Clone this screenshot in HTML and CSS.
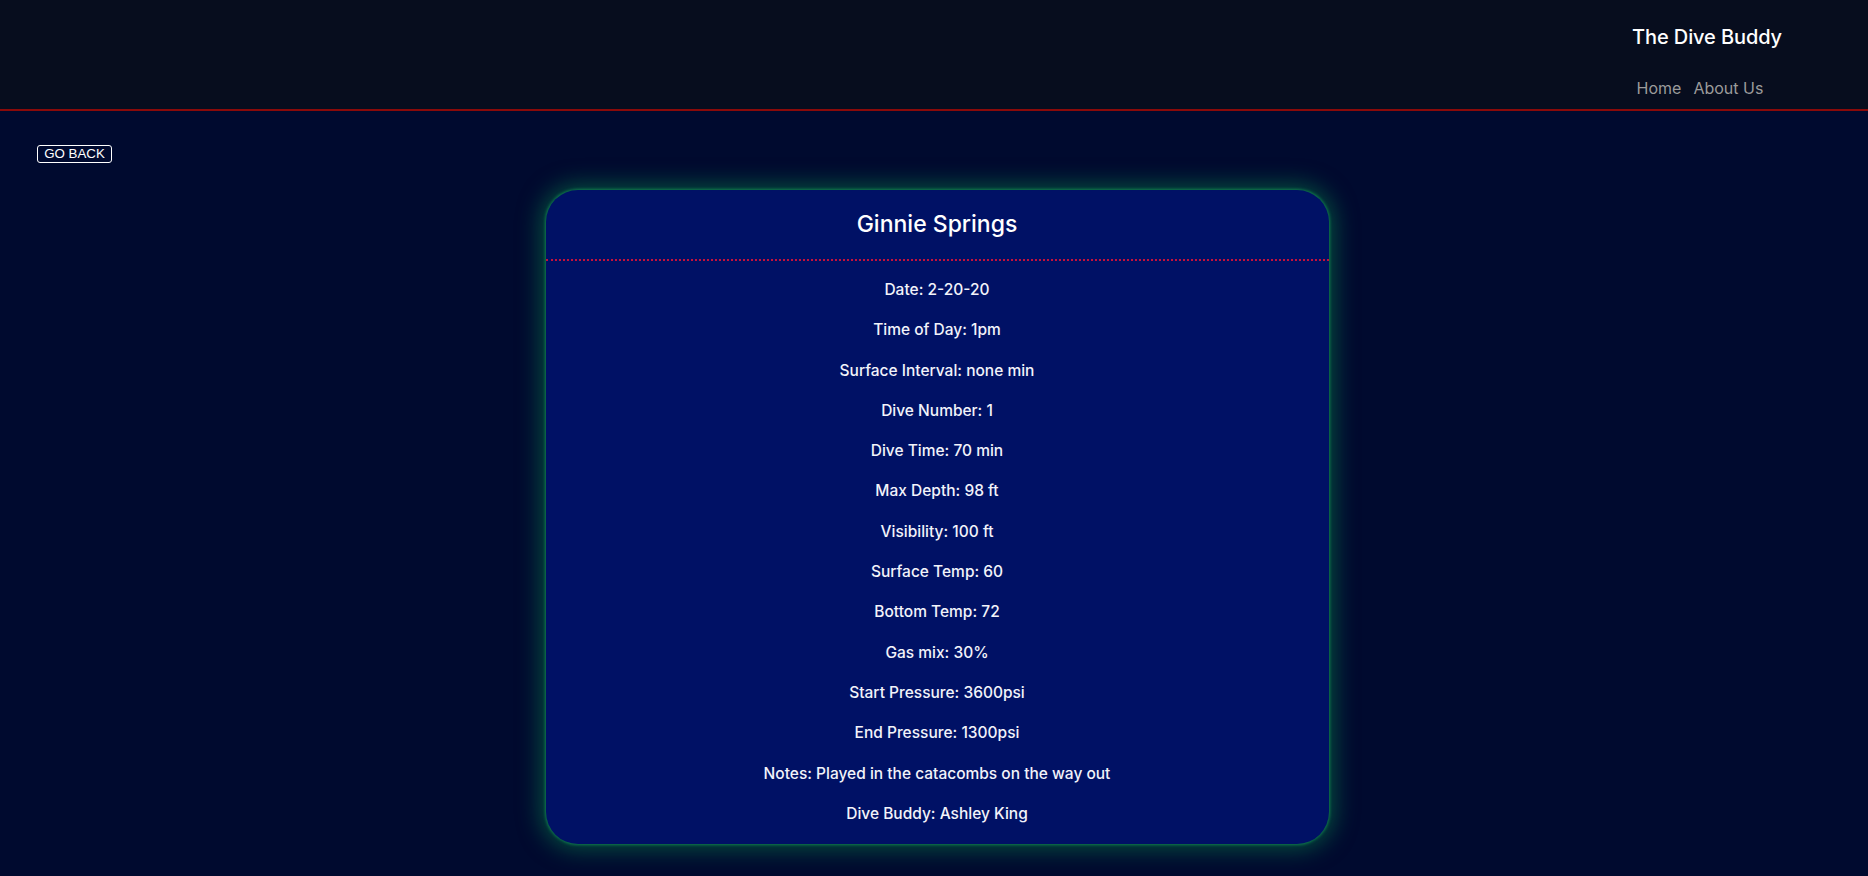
FILE: index.html
```html
<!DOCTYPE html>
<html lang="en">
<head>
<meta charset="utf-8">
<title>The Dive Buddy</title>
<link rel="stylesheet" href="styles.css">
</head>
<body>
<header class="site-header">
  <div class="brand-block">
    <div class="brand">The Dive Buddy</div>
    <nav class="nav">
      <a href="#" class="nav-link">Home</a>
      <a href="#" class="nav-link">About Us</a>
    </nav>
  </div>
</header>
<main class="main">
  <div class="back-row">
    <button class="back-btn">GO BACK</button>
  </div>
  <section class="card">
    <div class="card-head">
      <h2 class="card-title">Ginnie Springs</h2>
    </div>
    <div class="card-body">
      <p class="row">Date: 2-20-20</p>
      <p class="row">Time of Day: 1pm</p>
      <p class="row">Surface Interval: none min</p>
      <p class="row">Dive Number: 1</p>
      <p class="row">Dive Time: 70 min</p>
      <p class="row">Max Depth: 98 ft</p>
      <p class="row">Visibility: 100 ft</p>
      <p class="row">Surface Temp: 60</p>
      <p class="row">Bottom Temp: 72</p>
      <p class="row">Gas mix: 30%</p>
      <p class="row">Start Pressure: 3600psi</p>
      <p class="row">End Pressure: 1300psi</p>
      <p class="row">Notes: Played in the catacombs on the way out</p>
      <p class="row">Dive Buddy: Ashley King</p>
    </div>
  </section>
</main>
</body>
</html>
```

FILE: styles.css
```css
* { box-sizing: border-box; }
html, body {
  margin: 0;
  padding: 0;
  background: #000a2f;
  font-family: "Inter", "Noto Sans", sans-serif;
  color: #ffffff;
}
.site-header {
  height: 111px;
  background: #070d1e;
  border-bottom: 2px solid #8a0a0a;
  display: flex;
  justify-content: flex-end;
}
.brand-block {
  display: flex;
  flex-direction: column;
  align-items: center;
  margin-right: 86px;
  padding-top: 24px;
}
.brand {
  font-size: 20px;
  font-weight: 500;
  line-height: 26px;
  color: #ffffff;
  letter-spacing: -0.1px;
}
.nav {
  display: flex;
  gap: 12px;
  margin-top: 28px;
  padding-right: 14px;
}
.nav-link {
  color: #9b9b9b;
  text-decoration: none;
  font-size: 16px;
  line-height: 20px;
}
.main {
  display: flex;
  flex-direction: column;
  align-items: center;
  padding-bottom: 40px;
}
.back-row {
  align-self: stretch;
  padding: 31px 0 0 37px;
  height: 79px;
}
.back-btn {
  background: transparent;
  color: #ffffff;
  border: 1px solid #ffffff;
  border-radius: 3px;
  font-family: "Liberation Sans", Arial, sans-serif;
  font-size: 13.3px;
  height: 18px;
  width: 75px;
  padding: 0;
  line-height: 16px;
}
.card {
  width: 783px;
  margin-left: 6px;
  background: #001165;
  border-radius: 32px;
  box-shadow: 0 0 3px 1px rgba(18, 140, 80, 0.8), 0 0 22px 6px rgba(10, 130, 75, 0.55);
}
.card-head {
  padding: 20px 0 21px;
  border-bottom: 2px dotted #c8103a;
  text-align: center;
}
.card-title {
  margin: 0;
  font-size: 23px;
  font-weight: 500;
  line-height: 28px;
}
.card-body {
  display: flex;
  flex-direction: column;
  align-items: center;
  gap: 20.3px;
  padding: 19px 0 20px;
}
.row {
  margin: 0;
  font-size: 15.5px;
  font-weight: 500;
  line-height: 20px;
  color: #f2f3fa;
}
```
